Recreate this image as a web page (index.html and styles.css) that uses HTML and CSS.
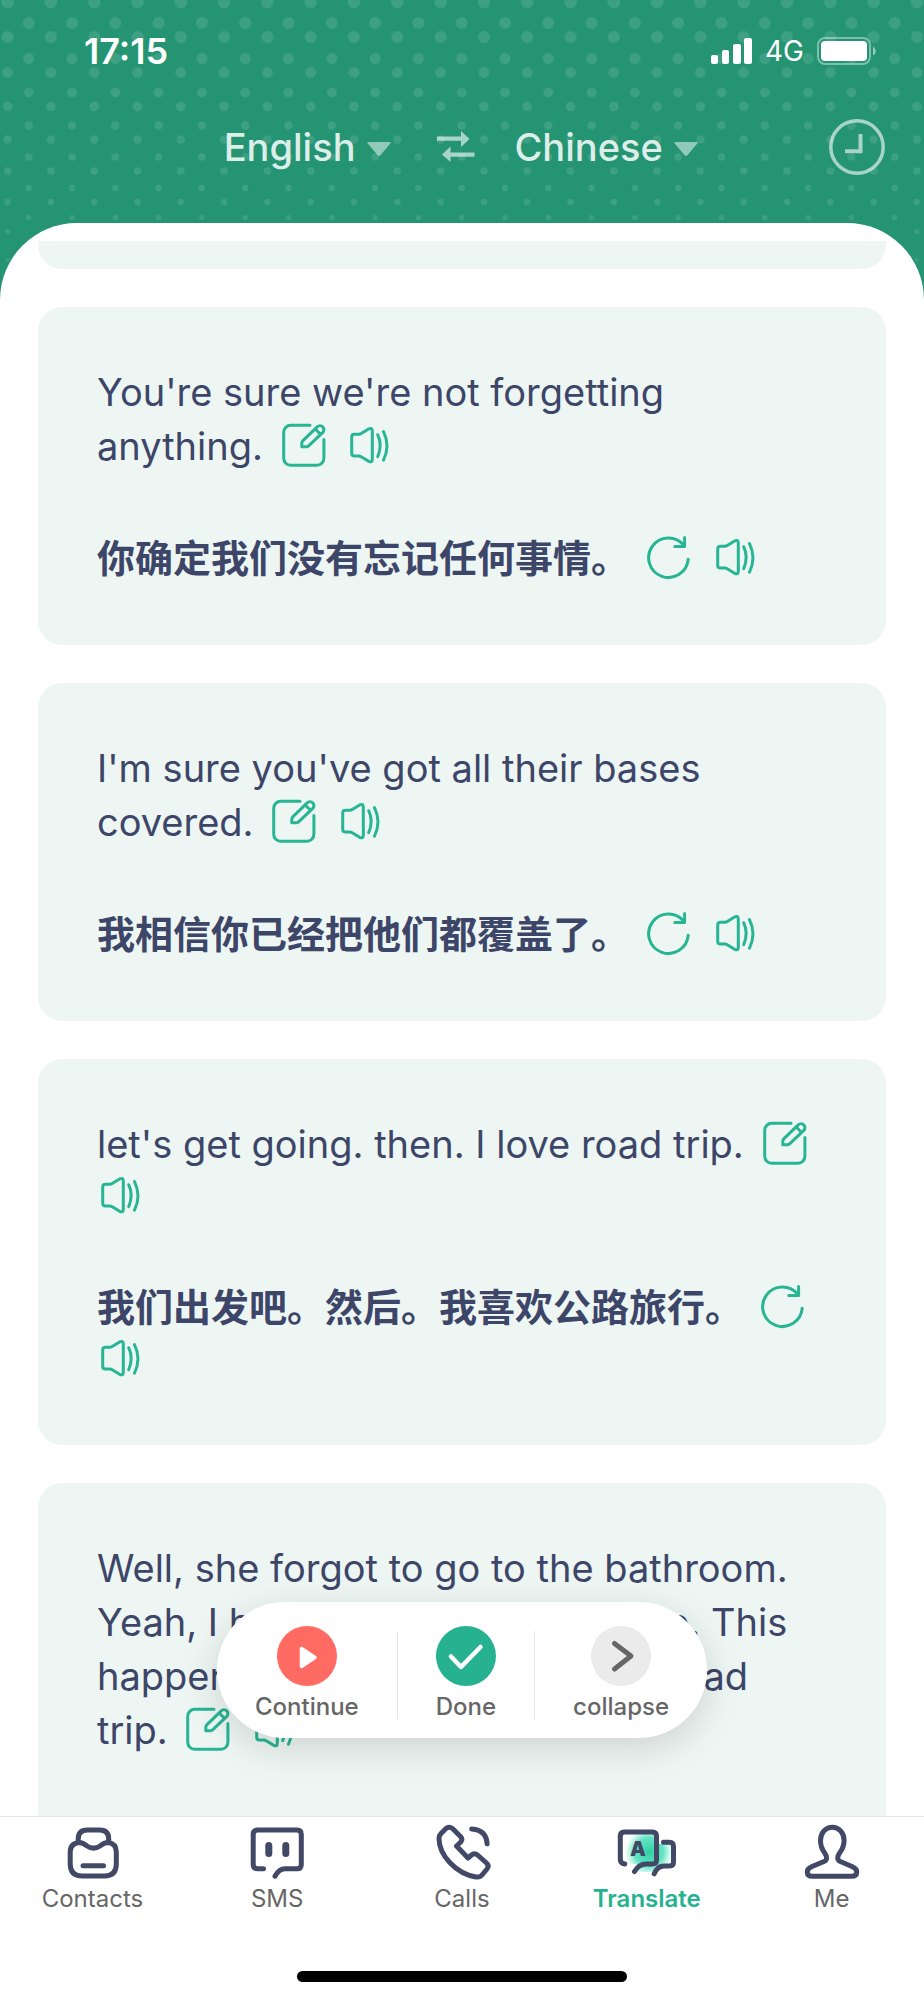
FILE: index.html
```
<!DOCTYPE html>
<html lang="en">
<head>
    <meta charset="UTF-8">
    <meta name="viewport" content="width=device-width, initial-scale=1.0">
    <title>Translate</title>
    <link rel="stylesheet" href="styles.css">
</head>
<body>
    <!-- shared icons -->
    <svg class="sprite" aria-hidden="true">
        <symbol id="icon-edit" viewBox="0 0 46 46">
            <path d="M30 3.3H10.7a7 7 0 0 0-7 7v26a7 7 0 0 0 7 7h26.2a7 7 0 0 0 7-7V17.5"/>
            <path d="M21.8 24.8v-3.4q0-1.6 1.2-2.8L37.2 4.9a3.9 3.9 0 0 1 5.6 5.5L28.6 23.8q-1.1 1-2.6 1z"/>
            <path d="M35.4 7.2l4.6 4.6"/>
        </symbol>
        <symbol id="icon-speaker" viewBox="0 0 46 46">
            <path d="M8.5 12.2h4.3q1.3 0 2.4-.7l7.4-4.6q3.7-1.6 3.7 2.1v28.2q0 3.7-3.7 2.1l-7.4-4.6q-1.1-.7-2.4-.7H8.5q-2.8 0-2.8-2.8V15q0-2.8 2.8-2.8z"/>
            <path d="M31.7 12.7q5 10.7 0 22"/>
            <path d="M37.5 9.6q7 14.2 0 28.6"/>
        </symbol>
        <symbol id="icon-reload" viewBox="0 0 46 46">
            <path d="M42.2 25.2A19.8 19.8 0 1 1 37.8 11.2"/>
            <path d="M38.6 3.4v9H28.8"/>
        </symbol>
        <symbol id="icon-caret" viewBox="0 0 24 14">
            <path d="M1.5 0h21q2 0 .8 1.6l-9.9 11.6q-1.4 1.4-2.8 0L.7 1.6Q-.5 0 1.5 0z"/>
        </symbol>
    </svg>

    <header class="header">
        <svg class="dots" aria-hidden="true">
            <defs>
                <pattern id="dots" width="43.3" height="300" patternUnits="userSpaceOnUse">
                    <circle cx="7.6" cy="2" r="6.3"/>
                    <circle cx="28.7" cy="23" r="6"/>
                    <circle cx="7.6" cy="37" r="6"/>
                    <circle cx="28.7" cy="58.5" r="5.5"/>
                    <circle cx="7.6" cy="72.5" r="5.4"/>
                    <circle cx="28.7" cy="92.5" r="4.9"/>
                    <circle cx="7.6" cy="106.5" r="4.8"/>
                    <circle cx="28.7" cy="125.5" r="4.3"/>
                    <circle cx="7.6" cy="139.5" r="4.2"/>
                    <circle cx="28.7" cy="157" r="3.8"/>
                    <circle cx="7.6" cy="171" r="3.8"/>
                    <circle cx="28.7" cy="188" r="3.2"/>
                    <circle cx="7.6" cy="202" r="3.2"/>
                    <circle cx="28.7" cy="217.5" r="2.6"/>
                    <circle cx="7.6" cy="231.5" r="2.5"/>
                    <circle cx="7.6" cy="260" r="1.8"/>
                </pattern>
            </defs>
            <rect width="100%" height="100%" fill="url(#dots)"/>
        </svg>

        <div class="status-bar">
            <span class="time">17:15</span>
            <div class="status-icons">
                <svg class="signal" viewBox="0 0 41 26" aria-hidden="true">
                    <rect x="0" y="17" width="7" height="9" rx="2"/>
                    <rect x="11" y="12" width="7" height="14" rx="2"/>
                    <rect x="22" y="6" width="8" height="20" rx="2"/>
                    <rect x="33" y="0" width="8" height="26" rx="2"/>
                </svg>
                <span class="network">4G</span>
                <svg class="battery" viewBox="0 0 60 28" aria-hidden="true">
                    <rect class="battery-case" x="1" y="1" width="52" height="26" rx="7"/>
                    <rect x="4" y="4" width="46" height="20" rx="4"/>
                    <path class="battery-tip" d="M56 9.5q2.8 1.5 2.8 4.5T56 18.5z"/>
                </svg>
            </div>
        </div>

        <div class="languages">
            <button class="language from">English
                <svg class="caret" aria-hidden="true"><use href="#icon-caret"/></svg>
            </button>
            <button class="swap" aria-label="Swap languages">
                <svg viewBox="0 0 38 32" aria-hidden="true">
                    <path d="M0 5.5h24V0l8.5 8-8.5 8V9.800H0z"/>
                    <path d="M37.5 25.7h-24V31L5 23.5l8.5-8v6h24z"/>
                </svg>
            </button>
            <div class="right">
                <button class="language">Chinese
                    <svg class="caret" aria-hidden="true"><use href="#icon-caret"/></svg>
                </button>
                <button class="history" aria-label="History">
                    <svg viewBox="0 0 56 56" aria-hidden="true">
                        <circle cx="28" cy="28" r="26.2"/>
                        <path d="M31.5 15v17.3H16"/>
                    </svg>
                </button>
            </div>
        </div>
    </header>

    <main class="sheet">
        <div class="list">
            <div class="card card-end"></div>

            <div class="card">
                <p><span class="text">You're sure we're not forgetting anything.</span>
                    <button class="icon" aria-label="Edit"><svg><use href="#icon-edit"/></svg></button>
                    <button class="icon" aria-label="Play"><svg><use href="#icon-speaker"/></svg></button></p>
                <p lang="zh-CN"><span class="text translated">你确定我们没有忘记任何事情。</span>
                    <button class="icon" aria-label="Reload"><svg><use href="#icon-reload"/></svg></button>
                    <button class="icon" aria-label="Play"><svg><use href="#icon-speaker"/></svg></button></p>
            </div>

            <div class="card">
                <p><span class="text">I'm sure you've got all their bases covered.</span>
                    <button class="icon" aria-label="Edit"><svg><use href="#icon-edit"/></svg></button>
                    <button class="icon" aria-label="Play"><svg><use href="#icon-speaker"/></svg></button></p>
                <p lang="zh-CN"><span class="text translated">我相信你已经把他们都覆盖了。</span>
                    <button class="icon" aria-label="Reload"><svg><use href="#icon-reload"/></svg></button>
                    <button class="icon" aria-label="Play"><svg><use href="#icon-speaker"/></svg></button></p>
            </div>

            <div class="card">
                <p><span class="text">let's get going. then. I love road trip.</span>
                    <button class="icon" aria-label="Edit"><svg><use href="#icon-edit"/></svg></button>
                    <button class="icon" aria-label="Play"><svg><use href="#icon-speaker"/></svg></button></p>
                <p lang="zh-CN"><span class="text translated">我们出发吧。然后。我喜欢公路旅行。</span>
                    <button class="icon" aria-label="Reload"><svg><use href="#icon-reload"/></svg></button>
                    <button class="icon" aria-label="Play"><svg><use href="#icon-speaker"/></svg></button></p>
            </div>

            <div class="card card-open">
                <p><span class="text">Well, she forgot to go to the bathroom. Yeah, I have warned them before. This happens every single time on a road trip.</span>
                    <button class="icon" aria-label="Edit"><svg><use href="#icon-edit"/></svg></button>
                    <button class="icon" aria-label="Play"><svg><use href="#icon-speaker"/></svg></button></p>
            </div>
        </div>

        <div class="controls">
            <button class="control">
                <svg viewBox="0 0 60 60" aria-hidden="true">
                    <circle cx="30" cy="30" r="30" fill="#ff6b62"/>
                    <path d="M24.500 22.500v18l13.500-9z" fill="#fff" stroke="#fff" stroke-width="3.500" stroke-linejoin="round"/>
                </svg>
                Continue
            </button>
            <span class="divider"></span>
            <button class="control">
                <svg viewBox="0 0 60 60" aria-hidden="true">
                    <circle cx="30" cy="30" r="30" fill="#26b290"/>
                    <path d="M15 30.500L25 41l19.500-20" fill="none" stroke="#fff" stroke-width="4.500" stroke-linecap="round" stroke-linejoin="round"/>
                </svg>
                Done
            </button>
            <span class="divider"></span>
            <button class="control">
                <svg viewBox="0 0 60 60" aria-hidden="true">
                    <circle cx="30" cy="30" r="30" fill="#ebebeb"/>
                    <path d="M23.500 17.500L40 30 23.500 43" fill="none" stroke="#666" stroke-width="5" stroke-linecap="round" stroke-linejoin="round"/>
                </svg>
                collapse
            </button>
        </div>
    </main>

    <nav class="tabs">
        <a class="tab" href="#contacts">
            <svg viewBox="0 0 60 60" aria-hidden="true">
                <path d="M16.200 20.500v-3.500q0-9 9-9h12.500q9 0 9 9v3.500"/>
                <path d="M17 20.500q4 0 7.500 3.200 7 4.800 14 0 3.500-3.200 7.500-3.200 8.300 1 8.300 9.500v12q0 12-12 12H20.200q-12 0-12-12V30q0-8.500 8.800-9.500z"/>
                <path d="M21 43.700h20.500"/>
            </svg>
            Contacts
        </a>
        <a class="tab" href="#sms">
            <svg viewBox="0 0 60 60" aria-hidden="true">
                <path d="M16.500 46.700h-6q-4.300 0-4.300-4.300V12.400q0-4.300 4.300-4.300h39.500q4.300 0 4.300 4.300v30q0 4.300-4.300 4.300H38q-6 0-10 7.500"/>
                <path class="thick" d="M21.800 23.500v8M38.800 23.500v8"/>
            </svg>
            SMS
        </a>
        <a class="tab" href="#calls">
            <svg viewBox="0 0 60 60" aria-hidden="true">
                <path d="M20.500 6.500l8 8q2.500 2.700.3 5.500L24.500 24 36 36l3.500-3q3-2.500 6 0l9 8q3 3 .5 6l-5 6q-2 2.500-6 2C24 52 7 33 7 16.500q0-3 2-5l5-5q3-2.500 6.500 0z"/>
                <path d="M39.700 7q14.600 1 15.400 14.800"/>
            </svg>
            Calls
        </a>
        <a class="tab active" href="#translate">
            <svg viewBox="0 0 60 60" aria-hidden="true">
                <defs>
                    <radialGradient id="glow" cx="32" cy="30" r="24" gradientUnits="userSpaceOnUse">
                        <stop offset="0" stop-color="#2fcfa6"/>
                        <stop offset="0.6" stop-color="#3fdcb5" stop-opacity="0.8"/>
                        <stop offset="1" stop-color="#5ff0cc" stop-opacity="0"/>
                    </radialGradient>
                </defs>
                <path class="glow" d="M5 12h34v10h17v20H45l-8 8H20V42H5z"/>
                <path d="M7.800 42q-4.500-.5-4.500-4.500V14q0-4 4-4h28.200q4 0 4 4v24q0 4-4 4H29q-7 0-11.500 7.500"/>
                <path d="M46.500 20.300h6q4 0 4 4V40q0 4-4 4H47q-6.500 0-9.800 7.800"/>
                <text x="21" y="34" text-anchor="middle">A</text>
            </svg>
            Translate
        </a>
        <a class="tab" href="#me">
            <svg viewBox="0 0 60 60" aria-hidden="true">
                <path d="M30.300 5.200c-7 0-11.800 6-11.800 13.300 0 5 1.500 9 4.200 12.500 2.500 3.500 2.500 7-.2 8.300L9.500 44.800c-6.500 3-5 9.500.5 9.500h40c5.500 0 7-6.500.5-9.500l-12.700-5.500c-2.700-1.300-2.700-4.800-.2-8.300 2.700-3.500 4.500-7.500 4.500-12.500 0-7.300-4.800-13.300-11.800-13.300z"/>
            </svg>
            Me
        </a>
    </nav>
    <div class="home-indicator"></div>
</body>
</html>
```

FILE: styles.css
```
* {
    box-sizing: border-box;
}

body {
    margin: 0;
    height: 100vh;
    display: flex;
    flex-direction: column;
    overflow: hidden;
    background: #259473;
    font-family: Inter, "Noto Sans CJK SC", sans-serif;
    color: #3d4668;
}

button {
    padding: 0;
    border: none;
    background: none;
    color: inherit;
    font: inherit;
    cursor: pointer;
}

svg {
    display: block;
}

.sprite {
    position: absolute;
    width: 0;
    height: 0;
}

/* header */
.header {
    position: relative;
    padding-bottom: 40px;
    color: #fff;
}

.dots {
    position: absolute;
    top: 0;
    left: 0;
    z-index: -1;
    width: 100%;
    height: 300px;
    fill: rgba(255, 255, 255, 0.11);
}

.status-bar {
    display: flex;
    justify-content: space-between;
    align-items: center;
    height: 102px;
    padding: 0 47px 0 84px;
}

.time {
    font-size: 36px;
    font-weight: 600;
}

.status-icons {
    display: flex;
    align-items: center;
    gap: 13px;
    fill: #fff;
}

.signal {
    width: 41px;
    height: 26px;
}

.network {
    font-size: 28px;
    line-height: 32px;
}

.battery {
    width: 60px;
    height: 28px;
}

.battery-case {
    fill: none;
    stroke: rgba(255, 255, 255, 0.4);
    stroke-width: 2;
}

.battery-tip {
    fill: rgba(255, 255, 255, 0.5);
}

.languages {
    display: grid;
    grid-template-columns: 1fr auto 1fr;
    align-items: center;
    height: 81px;
    padding: 9px 39px 0 20px;
}

.language {
    display: flex;
    align-items: center;
    gap: 11px;
    color: rgba(255, 255, 255, 0.85);
    font-size: 38px;
    font-weight: 500;
    line-height: 48px;
}

.from {
    justify-self: end;
}

.right {
    display: flex;
    justify-content: space-between;
    align-items: center;
}

.caret {
    width: 24px;
    height: 14px;
    margin-top: 4px;
    fill: rgba(255, 255, 255, 0.5);
}

.swap {
    margin: 0 40px 0 46px;
}

.swap svg {
    width: 38px;
    height: 32px;
    fill: rgba(255, 255, 255, 0.6);
}

.history svg {
    width: 56px;
    height: 56px;
    fill: none;
    stroke: rgba(255, 255, 255, 0.6);
    stroke-width: 3.5;
}

.history path {
    stroke-width: 4;
}

/* conversation */
.sheet {
    position: relative;
    flex: 1;
    min-height: 0;
    padding: 18px 38px 0;
    border-radius: 77px 77px 0 0;
    background: #fff;
}

.list {
    height: 100%;
    overflow: hidden;
}

.card {
    margin-bottom: 38px;
    padding: 58px 59px 60px;
    border-radius: 24px;
    background: #eef6f3;
}

.card-end {
    height: 28px;
    padding: 0;
    border-radius: 0 0 24px 24px;
}

.card-open {
    padding-bottom: 120px;
}

.card p {
    margin: 0;
    font-size: 38px;
    line-height: 51px;
}

.card p + p {
    margin-top: 58px;
}

.text {
    margin-right: 6px;
    line-height: 54px;
}

.translated {
    font-weight: 700;
}

.icon {
    margin-right: 10px;
    vertical-align: -8px;
}

.icon svg {
    width: 46px;
    height: 46px;
    fill: none;
    stroke: #28b594;
    stroke-width: 3;
    stroke-linecap: round;
    stroke-linejoin: round;
}

/* floating recorder controls */
.controls {
    position: absolute;
    left: 50%;
    bottom: 78px;
    transform: translateX(-50%);
    display: flex;
    height: 136px;
    border-radius: 68px;
    background: #fff;
    box-shadow: 0 10px 36px rgba(0, 0, 0, 0.14);
}

.control {
    display: flex;
    flex-direction: column;
    align-items: center;
    gap: 6px;
    padding: 24px 38px 0;
    color: #666;
    font-size: 24px;
    font-weight: 500;
    line-height: 30px;
}

.control svg {
    width: 60px;
    height: 60px;
}

.divider {
    width: 1px;
    height: 88px;
    margin-top: 29px;
    background: #e6e6e6;
}

/* bottom navigation */
.tabs {
    display: grid;
    grid-template-columns: repeat(5, 1fr);
    padding: 5px 0 55px;
    border-top: 1px solid #e8e8e8;
    background: #fff;
}

.tab {
    display: flex;
    flex-direction: column;
    align-items: center;
    color: #666;
    font-size: 24px;
    line-height: 34px;
    text-decoration: none;
}

.tab svg {
    width: 60px;
    height: 60px;
    fill: none;
    stroke: #414966;
    stroke-width: 5;
    stroke-linecap: round;
    stroke-linejoin: round;
}

.tab .thick {
    stroke-width: 7;
}

.tab .glow {
    fill: url(#glow);
    stroke: none;
}

.tab text {
    fill: #414966;
    stroke: none;
    font-size: 20px;
    font-weight: 900;
}

.active {
    color: #26b290;
    font-weight: 600;
}

.home-indicator {
    padding-bottom: 18px;
    background: #fff;
}

.home-indicator::before {
    content: "";
    display: block;
    width: 330px;
    height: 11px;
    margin: 0 auto;
    border-radius: 6px;
    background: #000;
}
```
